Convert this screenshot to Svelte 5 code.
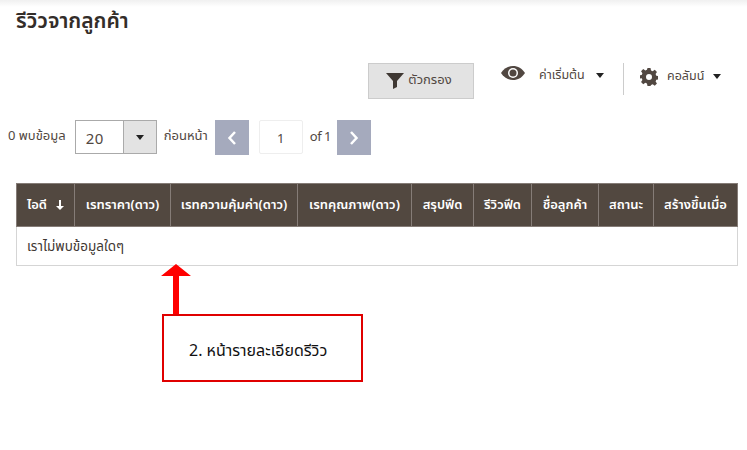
<script>
    const columns = [
        { label: "ไอดี", width: 58, sort: true },
        { label: "เรทราคา(ดาว)", width: 96 },
        { label: "เรทความคุ้มค่า(ดาว)", width: 127 },
        { label: "เรทคุณภาพ(ดาว)", width: 114 },
        { label: "สรุปฟีด", width: 62 },
        { label: "รีวิวฟีด", width: 58 },
        { label: "ชื่อลูกค้า", width: 67 },
        { label: "สถานะ", width: 55 },
        { label: "สร้างขึ้นเมื่อ", width: 84 },
    ];
</script>

<div class="page">
    <h1>รีวิวจากลูกค้า</h1>

    <div class="toolbar">
        <button class="filter">
            <svg width="18" height="16" viewBox="0 0 18 16"><path d="M0 0H18L11 8V14L7 16V8Z" fill="#3f3833" /></svg>
            <span class="filter-label">ตัวกรอง</span>
        </button>
        <div class="menu view">
            <svg class="eye" width="24" height="14" viewBox="0 0 24 14">
                <path d="M0 7C3 2.500 7 0 12 0S21 2.500 24 7C21 11.500 17 14 12 14S3 11.500 0 7Z" fill="#514741" />
                <circle cx="12" cy="7" r="5" fill="#fff" />
                <circle cx="12" cy="7" r="3.500" fill="#514741" />
            </svg>
            <span class="menu-label">ค่าเริ่มต้น</span>
            <span class="caret"></span>
        </div>
        <div class="menu columns">
            <svg width="18" height="18" viewBox="0 0 24 24">
                <path fill="#514741" fill-rule="evenodd" d="M10 0h4l.7 3.300 2.200.9 2.800-1.800 2.900 2.900-1.800 2.800.9 2.200 3.300.7v4l-3.300.7-.9 2.200 1.800 2.800-2.900 2.900-2.800-1.800-2.200.9L14 24h-4l-.7-3.300-2.200-.9-2.800 1.800-2.900-2.900 1.800-2.800-.9-2.200L-1 14v-4l3.300-.7.9-2.200-1.800-2.800 2.900-2.900 2.800 1.800 2.200-.9ZM12 8a4 4 0 1 0 0 8 4 4 0 0 0 0-8Z" />
            </svg>
            <span class="menu-label">คอลัมน์</span>
            <span class="caret"></span>
        </div>
    </div>

    <div class="pager">
        <span class="found">0 พบข้อมูล</span>
        <div class="select">
            <span class="select-value">20</span>
            <span class="select-btn"><span class="caret"></span></span>
        </div>
        <span class="prev-label">ก่อนหน้า</span>
        <span class="arrow-btn">
            <svg width="10" height="16" viewBox="0 0 10 16"><path d="M8 2L2.500 8L8 14" fill="none" stroke="#fff" stroke-width="2.500" /></svg>
        </span>
        <span class="page-no">1</span>
        <span class="of">of 1</span>
        <span class="arrow-btn">
            <svg width="10" height="16" viewBox="0 0 10 16"><path d="M2 2L7.500 8L2 14" fill="none" stroke="#fff" stroke-width="2.500" /></svg>
        </span>
    </div>

    <div class="table">
        <div class="head">
            {#each columns as col}
                <div class="th" style="width: {col.width}px">
                    {col.label}
                    {#if col.sort}
                        <svg width="8" height="10" viewBox="0 0 8 10"><path d="M3 0H5V6H8L4 10L0 6H3Z" fill="#fff" /></svg>
                    {/if}
                </div>
            {/each}
        </div>
        <div class="empty">เราไม่พบข้อมูลใดๆ</div>
    </div>

    <!-- annotation drawn over the page -->
    <svg class="note-arrow" width="30" height="52" viewBox="0 0 30 52">
        <path d="M15 0L30 12H18V52H12V12H0Z" fill="#f00" />
    </svg>
    <div class="note">2. หน้ารายละเอียดรีวิว</div>
</div>

<style>
    :global(body) {
        margin: 0;
        background: #fff;
    }
    .page {
        position: relative;
        width: 747px;
        height: 450px;
        overflow: hidden;
        box-sizing: border-box;
        padding-top: 7px;
        font-family: "Noto Sans", "Noto Sans Thai", "Liberation Sans", sans-serif;
        color: #514741;
        background: linear-gradient(#f0f0f0, #fff 7px);
    }
    h1 {
        margin: 0 0 0 16px;
        font-size: 21px;
        line-height: 27px;
        font-weight: 600;
        color: #332d29;
    }
    .toolbar {
        display: flex;
        align-items: flex-start;
        margin-top: 29px;
        padding-left: 368px;
        height: 36px;
    }
    .filter {
        display: flex;
        align-items: center;
        justify-content: center;
        gap: 4px;
        width: 106px;
        height: 36px;
        padding: 0 4px 0 0;
        background: #e3e3e3;
        border: 1px solid #ccc;
        font: inherit;
        font-size: 13px;
        color: #514741;
    }
    .filter-label {
        margin-top: -3px;
    }
    .menu {
        display: flex;
        align-items: center;
        box-sizing: border-box;
        height: 32px;
        font-size: 12.500px;
    }
    .view {
        margin-left: 27px;
        width: 123px;
        padding-bottom: 8px;
        border-right: 1px solid #ccc;
    }
    .eye {
        margin-top: -4px;
    }
    .columns {
        margin-left: 16px;
        padding-bottom: 5px;
    }
    .menu-label {
        margin: 0 11px 0 14px;
    }
    .columns .menu-label {
        margin: 0 9px 0 9px;
    }
    .caret {
        display: inline-block;
        width: 0;
        height: 0;
        border-left: 4px solid transparent;
        border-right: 4px solid transparent;
        border-top: 5px solid #222;
    }
    .pager {
        display: flex;
        align-items: center;
        height: 35px;
        margin-top: 21px;
        padding-left: 8px;
        font-size: 13px;
    }
    .found,
    .prev-label,
    .of {
        margin-top: -3px;
    }
    .select {
        display: flex;
        width: 82px;
        height: 34px;
        margin-left: 9px;
        margin-bottom: 1px;
        box-sizing: border-box;
        border: 1px solid #aaa;
    }
    .select-value {
        flex: 1;
        padding-left: 10px;
        font-size: 15px;
        letter-spacing: 0.500px;
        line-height: 34px;
    }
    .select-btn {
        display: flex;
        align-items: center;
        justify-content: center;
        width: 32px;
        background: #e3e3e3;
        border-left: 1px solid #aaa;
    }
    .prev-label {
        margin-left: 7px;
        margin-right: 7px;
    }
    .arrow-btn {
        display: flex;
        align-items: center;
        justify-content: center;
        width: 34px;
        height: 35px;
        background: #a5aabd;
    }
    .page-no {
        width: 44px;
        height: 34px;
        margin: 0 7px 1px 10px;
        box-sizing: border-box;
        border: 1px solid #eee;
        border-radius: 2px;
        text-align: center;
        font-size: 13px;
        line-height: 34px;
    }
    .of {
        margin-right: 6px;
        letter-spacing: -0.500px;
    }
    .table {
        width: 722px;
        margin: 28px 0 0 16px;
        box-sizing: border-box;
        border: 1px solid #d5d5d5;
        border-top: 0;
    }
    .head {
        display: flex;
        height: 44px;
        margin: 0 -1px;
        background: #524840;
        border: 1px solid #857c77;
        box-sizing: border-box;
    }
    .th {
        display: flex;
        align-items: center;
        justify-content: center;
        gap: 9px;
        box-sizing: border-box;
        border-right: 1px solid #857c77;
        color: #fff;
        font-size: 13px;
        font-weight: 600;
        white-space: nowrap;
    }
    .th:last-child {
        border-right: 0;
        flex: 1;
    }
    .empty {
        height: 38px;
        padding-left: 10px;
        font-size: 13.500px;
        line-height: 38px;
        color: #3f3833;
    }
    .note-arrow {
        position: absolute;
        left: 161px;
        top: 264px;
    }
    .note {
        position: absolute;
        left: 162px;
        top: 314px;
        width: 201px;
        height: 68px;
        box-sizing: border-box;
        border: 2px solid #e00000;
        background: #fff;
        padding-left: 25px;
        font-size: 16px;
        line-height: 68px;
        color: #111;
    }
</style>
